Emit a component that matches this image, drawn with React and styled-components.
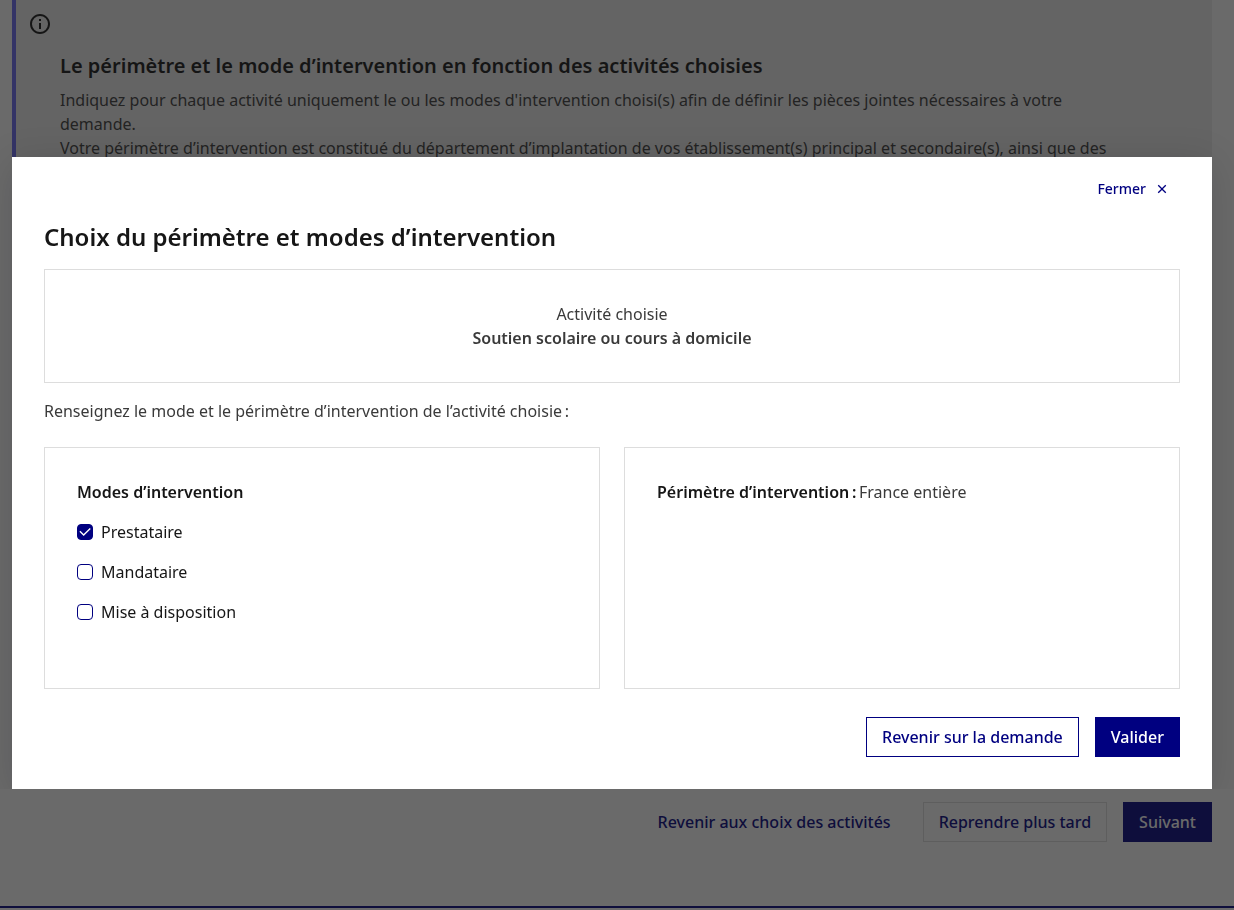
import React, { useState } from 'react';
import styled, { createGlobalStyle } from 'styled-components';

const GlobalStyle = createGlobalStyle`
    *, *::before, *::after {
        box-sizing: border-box;
    }
    body {
        margin: 0;
        background: #fff;
        color: #3a3a3a;
        font-family: "Noto Sans", "Open Sans", sans-serif;
        font-size: 16px;
        line-height: 24px;
    }
    h1, h2, h3, p {
        margin: 0;
    }
    strong {
        font-weight: 600;
    }
    button, input {
        font: inherit;
        margin: 0;
    }
`

const Page = styled.div`
    display: flex;
    flex-direction: column;
    min-height: 100vh;
`

const Main = styled.main`
    flex: 1;
    display: flex;
    flex-direction: column;
    justify-content: space-between;
    padding: 0 22px 64px 12px;
`

const Callout = styled.section`
    padding: 12px 80px 24px 12px;
    background: #eee;
    border-left: 4px solid #6a6af4;
    color: #161616;

    & > svg {
        display: block;
    }
`

const CalloutBody = styled.div`
    padding: 16px 0 0 32px;
`

const CalloutTitle = styled.h3`
    margin-bottom: 8px;
    font-size: 20px;
    line-height: 28px;
    font-weight: 600;
`

const CalloutText = styled.p`
    color: #3a3a3a;
`

const Actions = styled.div`
    display: flex;
    justify-content: flex-end;
    gap: 16px;
`

const variants = {
    primary: 'background: #000080; color: #fff; border-color: #000080;',
    secondary: 'background: transparent; color: #000080; border-color: #000080;',
    tertiary: 'background: transparent; color: #000080; border-color: #ddd;',
    plain: 'background: transparent; color: #000080; border-color: transparent;',
}

const Button = styled.button`
    height: 40px;
    padding: 0 15px;
    border: 1px solid;
    font-weight: 500;
    line-height: 24px;
    cursor: pointer;
    ${({ $variant }) => variants[$variant]}
`

const Footer = styled.footer`
    height: 4px;
    border-top: 2px solid #000080;
`

const Backdrop = styled.div`
    position: fixed;
    inset: 0;
    padding: 157px 22px 0 12px;
    background: rgba(22, 22, 22, .64);
    overflow: auto;
`

const Dialog = styled.div`
    padding: 16px 32px 32px;
    background: #fff;
    box-shadow: 0 6px 36px rgba(0, 0, 18, .16);
    clip-path: inset(-40px -40px 0 -40px);
`

const CloseButton = styled.button`
    display: flex;
    align-items: center;
    gap: 8px;
    margin-left: auto;
    padding: 4px 10px;
    border: 0;
    background: transparent;
    color: #000080;
    font-size: 14px;
    font-weight: 500;
    line-height: 24px;
    cursor: pointer;
`

const DialogTitle = styled.h1`
    margin: 16px 0;
    color: #161616;
    font-size: 24px;
    line-height: 32px;
    font-weight: 600;
`

const Card = styled.section`
    padding: 32px;
    border: 1px solid #ddd;
    color: #161616;
`

const ActivityCard = styled(Card)`
    margin-bottom: 16px;
    color: #3a3a3a;
    text-align: center;
`

const Columns = styled.div`
    display: grid;
    grid-template-columns: 1fr 1fr;
    gap: 24px;
    margin: 24px 0 28px;
`

const ModeFieldset = styled.fieldset`
    display: flex;
    flex-direction: column;
    gap: 16px;
    margin: 0;
    padding: 0 0 32px;
    border: 0;

    & > legend {
        margin-bottom: 16px;
        padding: 0;
        font-weight: 600;
    }
`

const ModeLabel = styled.label`
    display: flex;
    align-items: center;
    gap: 8px;
    cursor: pointer;
`

const CheckBox = styled.span`
    display: grid;
    width: 16px;
    height: 16px;

    & > * {
        grid-area: 1 / 1;
    }
    & > svg {
        pointer-events: none;
    }
`

const CheckInput = styled.input`
    appearance: none;
    width: 16px;
    height: 16px;
    border: 1px solid #000080;
    border-radius: 4px;
    background: #fff;

    &:checked {
        background: #000080;
    }
`

const Perimeter = styled.span`
    color: #3a3a3a;
`

const InfoIcon = () => (
    <svg width="24" height="24" viewBox="0 0 24 24" fill="#161616" aria-hidden="true">
        <path d="M12 22C6.477 22 2 17.523 2 12S6.477 2 12 2s10 4.477 10 10-4.477 10-10 10zm0-2a8 8 0 1 0 0-16 8 8 0 0 0 0 16zM11 7h2v2h-2V7zm0 4h2v6h-2v-6z" />
    </svg>
)

const CloseIcon = () => (
    <svg width="16" height="16" viewBox="0 0 24 24" fill="currentColor" aria-hidden="true">
        <path d="M12 10.586l4.95-4.95 1.414 1.414-4.95 4.95 4.95 4.95-1.414 1.414-4.95-4.95-4.95 4.95-1.414-1.414 4.95-4.95-4.95-4.95L7.05 5.636z" />
    </svg>
)

const CheckIcon = () => (
    <svg width="16" height="16" viewBox="0 0 24 24" fill="#fff" aria-hidden="true">
        <path d="M10 15.17l9.2-9.2 1.4 1.42L10 18l-6.36-6.36 1.4-1.42z" />
    </svg>
)

const modes = ['Prestataire', 'Mandataire', 'Mise à disposition']

const Mode = ({ name, checked, onChange }) => (
    <ModeLabel>
        <CheckBox>
            <CheckInput type="checkbox" checked={checked} onChange={onChange} />
            {checked && <CheckIcon />}
        </CheckBox>
        {name}
    </ModeLabel>
)

const InterventionDialog = () => {
    const [selected, setSelected] = useState(['Prestataire'])

    const toggle = name => {
        setSelected(selected.includes(name)
            ? selected.filter(item => item !== name)
            : [...selected, name])
    }

    return (
        <Dialog role="dialog" aria-modal="true" aria-labelledby="dialog-title">
            <CloseButton type="button">
                Fermer
                <CloseIcon />
            </CloseButton>
            <DialogTitle id="dialog-title">Choix du périmètre et modes d’intervention</DialogTitle>
            <ActivityCard>
                <p>Activité choisie</p>
                <p><strong>Soutien scolaire ou cours à domicile</strong></p>
            </ActivityCard>
            <p>Renseignez le mode et le périmètre d’intervention de l’activité choisie{'\u202f'}:</p>
            <Columns>
                <Card>
                    <ModeFieldset>
                        <legend>Modes d’intervention</legend>
                        {modes.map(name => (
                            <Mode
                                key={name}
                                name={name}
                                checked={selected.includes(name)}
                                onChange={() => toggle(name)}
                            />
                        ))}
                    </ModeFieldset>
                </Card>
                <Card>
                    <p>
                        <strong>Périmètre d’intervention{'\u202f'}:</strong>
                        <Perimeter>{'\u202f'}France entière</Perimeter>
                    </p>
                </Card>
            </Columns>
            <Actions>
                <Button type="button" $variant="secondary">Revenir sur la demande</Button>
                <Button type="button" $variant="primary">Valider</Button>
            </Actions>
        </Dialog>
    )
}

const App = () => {
    return (
        <>
            <GlobalStyle />
            <Page>
                <Main>
                    <Callout>
                        <InfoIcon />
                        <CalloutBody>
                            <CalloutTitle>Le périmètre et le mode d’intervention en fonction des activités choisies</CalloutTitle>
                            <CalloutText>
                                Indiquez pour chaque activité uniquement le ou les modes d'intervention choisi(s) afin de définir les pièces jointes nécessaires à votre demande.
                            </CalloutText>
                            <CalloutText>
                                Votre périmètre d’intervention est constitué du département d’implantation de vos établissement(s) principal et secondaire(s), ainsi que des
                            </CalloutText>
                        </CalloutBody>
                    </Callout>
                    <Actions>
                        <Button type="button" $variant="plain">Revenir aux choix des activités</Button>
                        <Button type="button" $variant="tertiary">Reprendre plus tard</Button>
                        <Button type="button" $variant="primary">Suivant</Button>
                    </Actions>
                </Main>
                <Footer />
            </Page>
            <Backdrop>
                <InterventionDialog />
            </Backdrop>
        </>
    )
}

export default App
